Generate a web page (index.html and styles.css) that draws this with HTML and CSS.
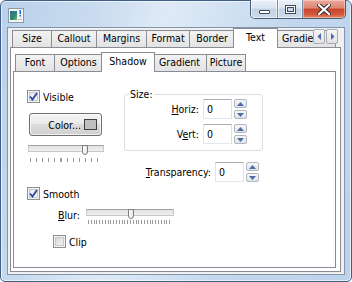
FILE: index.html
```html
<!DOCTYPE html>
<html>
<head>
<meta charset="utf-8">
<link rel="stylesheet" href="styles.css">
</head>
<body>
<div class="window">
  <div class="titlebar">
    <svg class="appicon" width="16" height="15" viewBox="0 0 16 15">
      <defs>
        <linearGradient id="ig" x1="0" y1="0" x2="1" y2="1">
          <stop offset="0" stop-color="#2f6f9a"/>
          <stop offset="0.6" stop-color="#2d8a6a"/>
          <stop offset="1" stop-color="#7fbf5a"/>
        </linearGradient>
      </defs>
      <rect x="0.5" y="0.5" width="15" height="14" fill="#f3f5f7" stroke="#8e9aa6"/>
      <rect x="2" y="3" width="7" height="9" fill="url(#ig)"/>
      <rect x="11.5" y="2" width="1.5" height="4" fill="#2a5fd0"/>
      <rect x="11.5" y="7" width="1.5" height="1.5" fill="#2a5fd0"/>
      <rect x="10" y="11" width="4" height="1" fill="#b8c2cc"/>
    </svg>
    <div class="capbtns">
      <div class="capbtn cmin"><span class="g-min"></span></div>
      <div class="capbtn cmax"><span class="g-max"></span></div>
      <div class="capbtn cclose">
        <svg width="14" height="11" viewBox="0 0 14 11">
          <path d="M2 1 L12 10 M12 1 L2 10" stroke="#3b2a2a" stroke-width="4.2" stroke-linecap="square"/>
          <path d="M2 1 L12 10 M12 1 L2 10" stroke="#ffffff" stroke-width="2.2" stroke-linecap="square"/>
        </svg>
      </div>
    </div>
  </div>
  <div class="client">
    <div class="tabctl">
      <div class="strip strip-outer">
        <div class="tab">Size</div>
        <div class="tab">Callout</div>
        <div class="tab">Margins</div>
        <div class="tab">Format</div>
        <div class="tab">Border</div>
        <div class="tab sel">Text</div>
        <div class="tab clipped">Gradient</div>
        <div class="scroller">
          <div class="sbtn"><svg width="5" height="7" viewBox="0 0 5 7"><path d="M4 0 L0.5 3.5 L4 7 Z" fill="#4a6ab0"/></svg></div>
          <div class="sbtn"><svg width="5" height="7" viewBox="0 0 5 7"><path d="M1 0 L4.5 3.5 L1 7 Z" fill="#4a6ab0"/></svg></div>
        </div>
      </div>
      <div class="page page-outer">
        <div class="tabctl">
          <div class="strip strip-inner">
            <div class="tab">Font</div>
            <div class="tab">Options</div>
            <div class="tab sel">Shadow</div>
            <div class="tab">Gradient</div>
            <div class="tab">Picture</div>
          </div>
          <div class="page page-inner">
            <div class="top-row">
              <div class="left-col">
                <label class="check">
                  <span class="box checked"><svg width="9" height="9" viewBox="0 0 9 9"><path d="M1 4.5 L3.5 7.5 L8 1" fill="none" stroke="#2c4aa8" stroke-width="1.9"/></svg></span>
                  <span>Visible</span>
                </label>
                <div class="button color-btn"><span>Color...</span><span class="swatch"></span></div>
                <div class="slider s1">
                  <div class="channel"><span class="thumb"></span></div>
                  <div class="ticks"></div>
                </div>
              </div>
              <fieldset class="group">
                <legend>Size:</legend>
                <div class="field-row r-horiz">
                  <span class="lbl"><u>H</u>oriz:</span>
                  <span class="edit">0</span>
                  <span class="spin"><span class="sp up"><svg width="7" height="4" viewBox="0 0 7 4"><path d="M0 4 L3.5 0 L7 4 Z" fill="#4d6aa5"/></svg></span><span class="sp dn"><svg width="7" height="4" viewBox="0 0 7 4"><path d="M0 0 L3.5 4 L7 0 Z" fill="#4d6aa5"/></svg></span></span>
                </div>
                <div class="field-row r-vert">
                  <span class="lbl">V<u>e</u>rt:</span>
                  <span class="edit">0</span>
                  <span class="spin"><span class="sp up"><svg width="7" height="4" viewBox="0 0 7 4"><path d="M0 4 L3.5 0 L7 4 Z" fill="#4d6aa5"/></svg></span><span class="sp dn"><svg width="7" height="4" viewBox="0 0 7 4"><path d="M0 0 L3.5 4 L7 0 Z" fill="#4d6aa5"/></svg></span></span>
                </div>
              </fieldset>
            </div>
            <div class="field-row r-trans">
              <span class="lbl"><u>T</u>ransparency:</span>
              <span class="edit">0</span>
              <span class="spin"><span class="sp up"><svg width="7" height="4" viewBox="0 0 7 4"><path d="M0 4 L3.5 0 L7 4 Z" fill="#4d6aa5"/></svg></span><span class="sp dn"><svg width="7" height="4" viewBox="0 0 7 4"><path d="M0 0 L3.5 4 L7 0 Z" fill="#4d6aa5"/></svg></span></span>
            </div>
            <label class="check smooth">
              <span class="box checked"><svg width="9" height="9" viewBox="0 0 9 9"><path d="M1 4.5 L3.5 7.5 L8 1" fill="none" stroke="#2c4aa8" stroke-width="1.9"/></svg></span>
              <span>Smooth</span>
            </label>
            <div class="blur-row">
              <span class="lbl"><u>B</u>lur:</span>
              <div class="slider s2">
                <div class="channel"><span class="thumb"></span></div>
                <div class="ticks"></div>
              </div>
            </div>
            <label class="check clip">
              <span class="box"></span>
              <span>Clip</span>
            </label>
          </div>
        </div>
      </div>
    </div>
  </div>
</div>
</body>
</html>
```

FILE: styles.css
```css
* { box-sizing: border-box; }
html, body { margin: 0; padding: 0; }
body {
  width: 352px; height: 282px; overflow: hidden; background: #fff;
  font-family: "DejaVu Sans Condensed", "DejaVu Sans", sans-serif;
  font-stretch: condensed;
  font-size: 10.5px; color: #000;
}
.window {
  width: 352px; height: 282px;
  border: 1px solid #3f5f86;
  border-radius: 6px 6px 5px 5px;
  background: linear-gradient(105deg, #b9d1ea 0%, #c8dbef 22%, #dfeaf6 40%, #d3e3f3 52%, #c2d7ed 70%, #bcd3eb 100%);
  box-shadow: inset 0 0 0 1px rgba(255,255,255,0.6);
  padding: 0 6px 6px 6px;
  display: flex; flex-direction: column;
}
.titlebar { height: 26px; display: flex; align-items: flex-start; }
.appicon { margin: 7px 0 0 1px; }
.capbtns {
  margin-left: auto; margin-top: -1px; margin-right: -1px;
  display: flex; height: 19px;
  border: 1px solid #4a5d78; border-top: 0;
  border-radius: 0 0 5px 5px; overflow: hidden;
}
.capbtn { height: 18px; display: flex; align-items: center; justify-content: center; }
.cmin, .cmax {
  background: linear-gradient(#e9f0f8 0%, #dbe5f1 45%, #c3d2e4 50%, #cddbec 100%);
  border-right: 1px solid #7d8ea6;
  box-shadow: inset 0 0 0 1px rgba(255,255,255,0.55);
}
.cmin { width: 27px; }
.cmax { width: 25px; }
.cclose {
  width: 42px;
  background: linear-gradient(#e9a99b 0%, #dd8772 45%, #c6452c 50%, #d4583d 80%, #e08a6c 100%);
  box-shadow: inset 0 0 0 1px rgba(255,220,210,0.5);
}
.g-min {
  width: 11px; height: 4px; margin-top: 6px;
  background: #fff; border: 1px solid #3d4a5c; border-radius: 1px;
}
.g-max {
  width: 11px; height: 9px;
  border: 1px solid #3d4a5c; background: #fff;
  box-shadow: inset 0 0 0 1px #fff, inset 0 0 0 2px #3d4a5c, inset 0 0 0 9px #c9d6e6;
}
.client {
  flex: 1; display: flex;
  border: 1px solid #8395ad;
  background: #f0f0f0;
  padding: 0 3px 2px 2px;
}
.tabctl { flex: 1; display: flex; flex-direction: column; min-width: 0; }
.strip { height: 19px; display: grid; align-items: end; padding-left: 2px; position: relative; z-index: 1; }
.strip-outer { grid-template-columns: 40px 45px 50px 43px 45px 41px 60px; }
.strip-inner { grid-template-columns: 40px 48px 50px 54px 39px; }
.tab {
  height: 17px;
  border: 1px solid #898c95; border-bottom: 0;
  background: linear-gradient(#f2f2f2, #e3e3e3);
  text-align: center; line-height: 15px; white-space: nowrap; overflow: hidden;
}
.tab + .tab { border-left: 0; }
.tab.sel {
  height: 20px; margin: 0 -2px -1px -2px;
  background: #fff; border-left: 1px solid #898c95;
  line-height: 16px; position: relative; z-index: 2;
}
.tab.clipped { text-align: left; padding-left: 6px; }
.scroller {
  position: absolute; right: 3px; top: 1px;
  display: flex; gap: 1px; z-index: 3;
}
.sbtn {
  width: 12px; height: 15px;
  border: 1px solid #a7abb2; border-radius: 2px;
  background: linear-gradient(#f6f6f6, #e2e2e2);
  display: flex; align-items: center; justify-content: center;
}
.page { flex: 1; border: 1px solid #898c95; background: #fff; display: flex; }
.page-outer { padding: 4px 4px 3px 2px; }
.page-inner { flex-direction: column; padding: 18px 0 0 13px; }

.top-row { display: flex; align-items: flex-start; }
.left-col { width: 97px; display: flex; flex-direction: column; }
.check { display: flex; align-items: center; gap: 3px; height: 13px; }
.box {
  width: 13px; height: 13px; flex: none;
  border: 1px solid #8f8f8f;
  background: linear-gradient(135deg, #dfe1e4 0%, #f4f5f6 60%, #ffffff 100%);
  box-shadow: inset 0 0 0 1px #f4f4f4, inset 0 0 0 2px #c5c9ce;
  display: flex; align-items: center; justify-content: center;
}
.button {
  border: 1px solid #707070; border-radius: 3px;
  background: linear-gradient(#f3f3f3 0%, #ebebeb 49%, #dddddd 50%, #cfcfcf 100%);
  box-shadow: inset 0 0 0 1px rgba(255,255,255,0.7);
}
.color-btn {
  width: 73px; height: 23px; margin: 10px 0 0 2px;
  display: flex; align-items: center; justify-content: flex-end; gap: 3px;
  padding-right: 4px;
}
.swatch { width: 13px; height: 11px; border: 1px solid #404040; background: #c0c0c0; }
.slider { position: relative; }
.s1 { width: 76px; margin: 9px 0 0 1px; }
.channel {
  height: 7px; position: relative;
  border: 1px solid #c8c8c8; border-top-color: #a0a0a0;
  background: linear-gradient(#e2e4e4, #eef0f0);
}
.thumb {
  position: absolute; top: -1px; width: 6px; height: 10px;
  background: linear-gradient(90deg, #fdfdfd, #e6e6e6);
  border: 1px solid #7e7e7e; border-radius: 0 0 3px 3px;
}
.s1 .thumb { left: 53px; }
.ticks {
  height: 4px; margin: 6px 2px 0 2px;
  background-image: repeating-linear-gradient(90deg, #9a9a9a 0 1px, transparent 1px 6.1px);
}
.group {
  margin: -2px 0 0 0; padding: 0 15px 0 0;
  width: 139px; height: 63px;
  border: 1px solid #d5dfe5; border-radius: 3px;
  min-width: 0;
}
.group legend { padding: 0 1px; margin-left: 4px; line-height: 12px; }
.field-row { display: flex; align-items: center; justify-content: flex-end; }
.r-horiz { margin-top: -1px; }
.r-vert { margin-top: 5px; }
.lbl { margin-right: 4px; }
.edit {
  width: 29px; height: 20px; line-height: 18px; padding-left: 3px;
  border: 1px solid #abadb3; border-left-color: #e2e3ea; border-bottom-color: #e3e9ef; border-right-color: #dbdfe6;
  background: #fff;
}
.spin { display: flex; flex-direction: column; gap: 2px; margin-left: 2px; }
.sp {
  width: 13px; height: 9px;
  border: 1px solid #b0b6bf; border-radius: 2px;
  background: linear-gradient(#f7f7f7, #e1e4e8);
  display: flex; align-items: center; justify-content: center;
}
.r-trans { width: 232px; margin-top: 0; }
.smooth { margin-top: 5px; }
.blur-row { display: flex; align-items: flex-start; margin: 9px 0 0 31px; }
.blur-row .lbl { margin-right: 6px; line-height: 12px; margin-top: 0; }
.s2 { width: 88px; }
.s2 .thumb { left: 41px; }
.s2 .ticks { margin-top: 4px; background-image: repeating-linear-gradient(90deg, #9a9a9a 0 1px, transparent 1px 2.8px); }
.clip { margin: 11px 0 0 26px; }
.clip .box { background: linear-gradient(135deg, #cfd2d6 0%, #e9eaec 60%, #f7f7f7 100%); }
```
